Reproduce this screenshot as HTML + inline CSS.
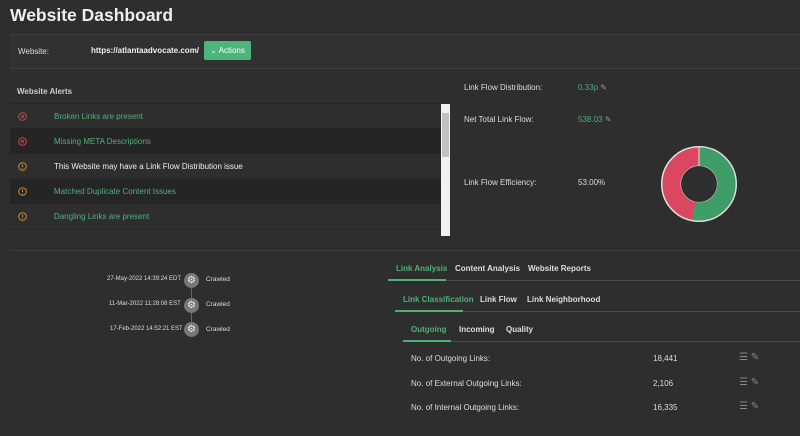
<!DOCTYPE html><html><head><style>
body{margin:0;width:800px;height:436px;background:#2e2e2e;font-family:"Liberation Sans",sans-serif;color:#ddd;position:relative;overflow:hidden;font-size:8px}
.a{position:absolute;white-space:nowrap}
.g{color:#4fb07a}
.row{position:absolute;left:10px;width:431px;height:25px;border-top:1px solid #262626}
.row.d{background:#252525}
.ic{position:absolute;left:8px;top:8px}
.row span{position:absolute;left:44px;top:8px}
.tab{position:absolute;font-weight:bold;font-size:8px}
.gear{position:absolute;left:184px;width:15px;height:15px;border-radius:50%;background:#777;color:#eee;text-align:center;line-height:15px;font-size:10px}
</style></head><body>
<div class="a" style="left:10px;top:5px;font-size:17.5px;font-weight:bold;color:#eee">Website Dashboard</div>
<div class="a" style="left:10px;top:34px;width:790px;height:33px;background:#313131;border-top:1px solid #3c3c3c;border-bottom:1px solid #3c3c3c"></div>
<div class="a" style="left:18px;top:47px">Website:</div>
<div class="a" style="left:91px;top:46px;font-weight:bold;color:#eee">https://atlantaadvocate.com/</div>
<div class="a" style="left:204px;top:41px;width:47px;height:19px;background:#4cb57a;border-radius:2px;color:#fff;line-height:19px;text-align:center">⌄ Actions</div>
<div class="a" style="left:17px;top:87px;font-weight:bold;color:#ccc">Website Alerts</div>
<svg width="0" height="0" style="position:absolute"><defs>
<g id="x"><circle cx="4.5" cy="4.5" r="3.8" fill="none" stroke="#d04545" stroke-width="1"/><path d="M3 3L6 6M6 3L3 6" stroke="#d04545" stroke-width="1"/></g>
<g id="w"><circle cx="4.5" cy="4.5" r="3.8" fill="none" stroke="#d08a3a" stroke-width="1"/><path d="M4.5 2.5V5M4.5 6V6.8" stroke="#d08a3a" stroke-width="1"/></g>
</defs></svg>
<div class="row" style="top:103px"><svg class="ic" width="9" height="9"><use href="#x"/></svg><span class="g">Broken Links are present</span></div>
<div class="row d" style="top:128px"><svg class="ic" width="9" height="9"><use href="#x"/></svg><span class="g">Missing META Descriptions</span></div>
<div class="row" style="top:153px"><svg class="ic" width="9" height="9"><use href="#w"/></svg><span style="color:#eee">This Website may have a Link Flow Distribution issue</span></div>
<div class="row d" style="top:178px"><svg class="ic" width="9" height="9"><use href="#w"/></svg><span class="g">Matched Duplicate Content Issues</span></div>
<div class="row" style="top:203px;border-bottom:1px solid #262626"><svg class="ic" width="9" height="9"><use href="#w"/></svg><span class="g">Dangling Links are present</span></div>
<div class="a" style="left:441px;top:104px;width:9px;height:132px;background:#f1f1f1"><div style="margin:9px 1px;height:44px;background:#c1c1c1"></div></div>
<div class="a" style="left:464px;top:83px">Link Flow Distribution:</div>
<div class="a g" style="left:578px;top:83px">0.33p <span style="color:#999">✎</span></div>
<div class="a" style="left:464px;top:115px">Net Total Link Flow:</div>
<div class="a g" style="left:578px;top:115px">538.03 <span style="color:#999">✎</span></div>
<div class="a" style="left:464px;top:178px">Link Flow Efficiency:</div>
<div class="a" style="left:578px;top:178px">53.00%</div>
<svg class="a" style="left:659px;top:144px" width="80" height="80" viewBox="0 0 80 80">
<circle cx="40" cy="40" r="28" fill="none" stroke="#e0e0e0" stroke-width="20"/>
<circle cx="40" cy="40" r="27.5" fill="none" stroke="#db4660" stroke-width="18"/>
<circle cx="40" cy="40" r="27.5" fill="none" stroke="#3f9d68" stroke-width="18" stroke-dasharray="91.6 200" transform="rotate(-90 40 40)"/>
<line x1="40" y1="3" x2="40" y2="22" stroke="#e0e0e0" stroke-width="1"/>
</svg>
<div class="a" style="left:10px;top:250px;width:790px;height:1px;background:#3d3d3d"></div>
<div class="a" style="left:191px;top:285px;width:1px;height:46px;background:#666"></div>
<div class="a" style="left:107px;top:276px;font-size:6px">27-May-2022 14:39:24 EDT</div><div class="gear" style="top:273px">⚙</div><div class="a" style="left:206px;top:276px;font-size:6.5px">Crawled</div>
<div class="a" style="left:109px;top:301px;font-size:6px">11-Mar-2022 11:28:08 EST</div><div class="gear" style="top:298px">⚙</div><div class="a" style="left:206px;top:301px;font-size:6.5px">Crawled</div>
<div class="a" style="left:110px;top:326px;font-size:6px">17-Feb-2022 14:52:21 EST</div><div class="gear" style="top:322px">⚙</div><div class="a" style="left:206px;top:326px;font-size:6.5px">Crawled</div>
<div class="tab a g" style="left:396px;top:264px">Link Analysis</div><div class="tab a" style="left:455px;top:264px">Content Analysis</div><div class="tab a" style="left:528px;top:264px">Website Reports</div>
<div class="a" style="left:388px;top:280px;width:412px;height:1px;background:#4a4a4a"></div><div class="a" style="left:388px;top:279px;width:58px;height:2px;background:#4fb07a"></div>
<div class="tab a g" style="left:403px;top:295px">Link Classification</div><div class="tab a" style="left:480px;top:295px">Link Flow</div><div class="tab a" style="left:527px;top:295px">Link Neighborhood</div>
<div class="a" style="left:395px;top:311px;width:405px;height:1px;background:#4a4a4a"></div><div class="a" style="left:395px;top:310px;width:68px;height:2px;background:#4fb07a"></div>
<div class="tab a g" style="left:411px;top:325px">Outgoing</div><div class="tab a" style="left:459px;top:325px">Incoming</div><div class="tab a" style="left:506px;top:325px">Quality</div>
<div class="a" style="left:403px;top:341px;width:397px;height:1px;background:#4a4a4a"></div><div class="a" style="left:403px;top:340px;width:48px;height:2px;background:#4fb07a"></div>
<div class="a" style="left:411px;top:354px">No. of Outgoing Links:</div><div class="a" style="left:653px;top:354px">18,441</div><div class="a" style="left:739px;top:352px;color:#888;font-size:10px">☰ ✎</div>
<div class="a" style="left:411px;top:379px">No. of External Outgoing Links:</div><div class="a" style="left:653px;top:379px">2,106</div><div class="a" style="left:739px;top:377px;color:#888;font-size:10px">☰ ✎</div>
<div class="a" style="left:411px;top:403px">No. of Internal Outgoing Links:</div><div class="a" style="left:653px;top:403px">16,335</div><div class="a" style="left:739px;top:401px;color:#888;font-size:10px">☰ ✎</div>
</body></html>
